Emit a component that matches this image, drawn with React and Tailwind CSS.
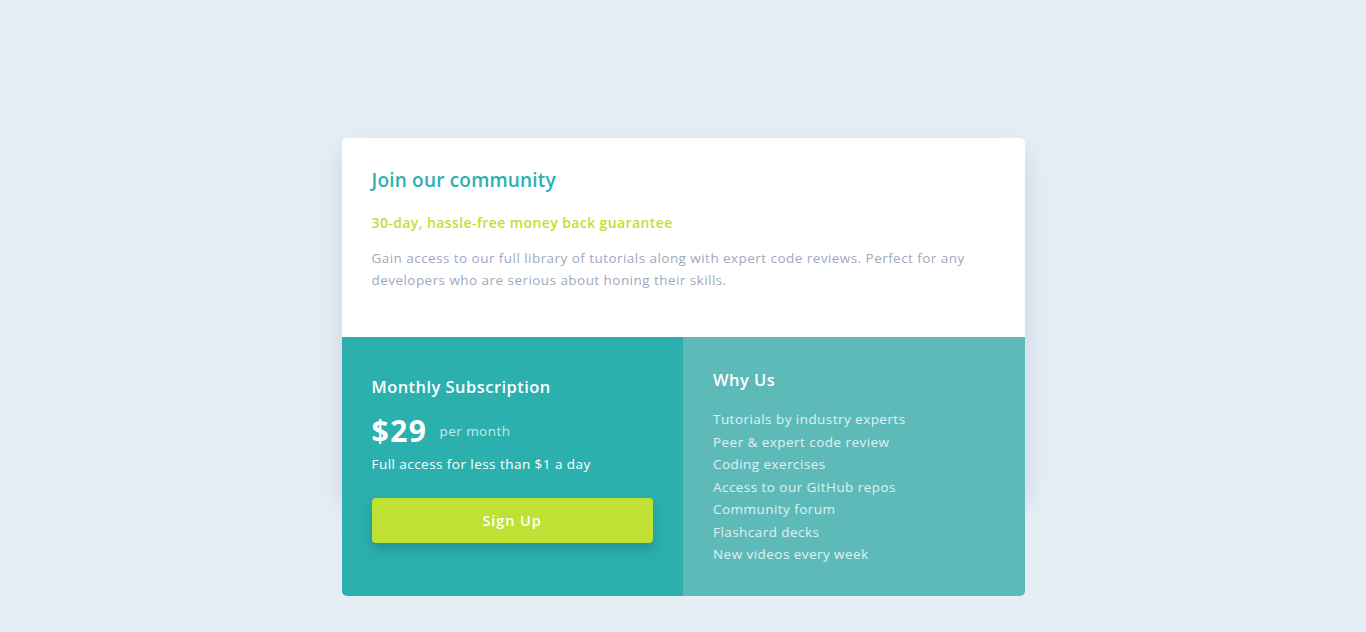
export default function App() {
    const reasons = [
        'Tutorials by industry experts',
        'Peer & expert code review',
        'Coding exercises',
        'Access to our GitHub repos',
        'Community forum',
        'Flashcard decks',
        'New videos every week',
    ];

    return (
        <div className="h-screen bg-[#e6eef5] flex items-center justify-center font-['Open_Sans',sans-serif]">
            <div className="w-[683px] h-[356px] rounded-[5px] shadow-[0_12px_28px_rgba(70,90,120,0.18)]">
                <div className="bg-white rounded-t-[5px] px-[30px] pt-[30px] pb-[46px]">
                    <h1 className="text-[19px] leading-[24px] font-semibold tracking-[0.2px] text-[#2bb0ae]">Join our community</h1>
                    <p className="mt-[21px] text-[14px] leading-[20px] font-semibold tracking-[0.4px] text-[#bfdf32]">
                        30-day, hassle-free money back guarantee
                    </p>
                    <p className="mt-[14px] text-[13.5px] leading-[22px] tracking-[0.45px] text-[#a1a8be]">
                        Gain access to our full library of tutorials along with expert code reviews. Perfect for any
                        developers who are serious about honing their skills.
                    </p>
                </div>
                <div className="grid grid-cols-2 text-white">
                    <div className="bg-[#2bb0ae] rounded-bl-[5px] px-[30px] pt-[38px]">
                        <h2 className="text-[16.5px] leading-[24px] font-semibold tracking-[0.45px]">Monthly Subscription</h2>
                        <div className="mt-[14px] flex items-center gap-[12px]">
                            <span className="text-[30px] leading-[36px] font-bold tracking-[1.5px]">$29</span>
                            <span className="text-[13.5px] tracking-[0.45px] text-white/75">per month</span>
                        </div>
                        <p className="mt-[5px] text-[13.5px] leading-[20px] tracking-[0.45px]">Full access for less than $1 a day</p>
                        <button className="mt-[24px] w-[281px] h-[45px] rounded-[4px] bg-[#bfe133] text-[14.5px] font-semibold tracking-[0.9px] text-white shadow-[0_6px_12px_rgba(20,60,60,0.25)]">
                            Sign Up
                        </button>
                    </div>
                    <div className="bg-[#5eb9b9] rounded-br-[5px] px-[30px] pt-[31px] pb-[30px]">
                        <h2 className="text-[16.5px] leading-[24px] font-semibold tracking-[0.45px]">Why Us</h2>
                        <ul className="mt-[16px] text-[13.5px] leading-[22.5px] tracking-[0.45px] text-white/80">
                            {reasons.map((r) => (
                                <li key={r}>{r}</li>
                            ))}
                        </ul>
                    </div>
                </div>
            </div>
        </div>
    );
}
